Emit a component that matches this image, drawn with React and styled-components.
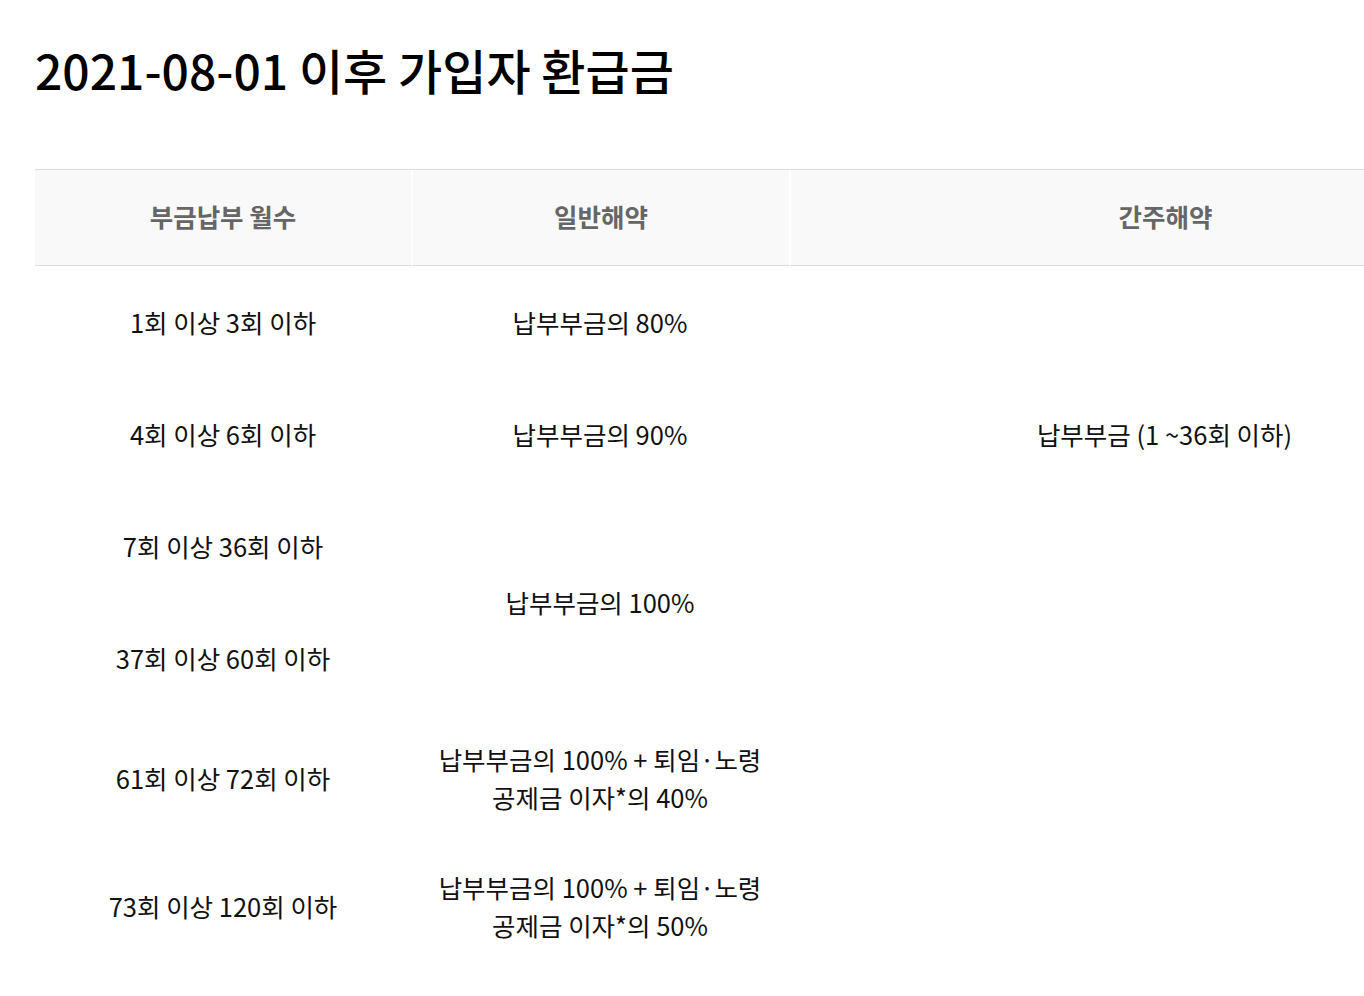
import React from 'react';
import styled, { createGlobalStyle } from 'styled-components';

const GlobalStyle = createGlobalStyle`
  html, body {
    margin: 0;
    padding: 0;
    background: #fff;
    overflow-x: hidden;
  }
  body {
    font-family: "Noto Sans CJK KR", "Noto Sans", sans-serif;
    color: #111;
  }
`;

const Page = styled.div`
  padding: 34px 0 40px 35px;
`;

const Title = styled.h2`
  margin: 0 0 65px;
  font-size: 48px;
  font-weight: 500;
  line-height: 70px;
  color: #000;
`;

const Table = styled.table`
  width: 1505px;
  table-layout: fixed;
  border-collapse: separate;
  border-spacing: 0;
  border-top: 1px solid #dddddd;
`;

const Th = styled.th`
  box-sizing: border-box;
  height: 96px;
  padding: 0 0 4px;
  background: #f9f9f9;
  border-bottom: 1px solid #dddddd;
  border-left: ${p => (p.first ? '0' : '2px solid #fff')};
  font-size: 25.5px;
  font-weight: 700;
  color: #666;
  text-align: center;
  vertical-align: middle;
`;

const Td = styled.td`
  height: 112px;
  padding: 26px 10px;
  box-sizing: border-box;
  font-size: 25.5px;
  font-weight: 400;
  line-height: 38px;
  color: #111;
  text-align: center;
  vertical-align: middle;
`;

const rows = [
  { months: '1회 이상 3회 이하', normal: '납부부금의 80%' },
  { months: '4회 이상 6회 이하', normal: '납부부금의 90%' },
  { months: '7회 이상 36회 이하', normal: '납부부금의 100%', normalSpan: 2 },
  { months: '37회 이상 60회 이하', skipNormal: true },
  { months: '61회 이상 72회 이하', normal: ['납부부금의 100% + 퇴임·노령', '공제금 이자*의 40%'] },
  { months: '73회 이상 120회 이하', normal: ['납부부금의 100% + 퇴임·노령', '공제금 이자*의 50%'] },
];

const renderLines = value =>
  Array.isArray(value)
    ? value.map((line, i) => (
        <React.Fragment key={i}>
          {i > 0 && <br />}
          {line}
        </React.Fragment>
      ))
    : value;

export default function App() {
  return (
    <>
      <GlobalStyle />
      <Page>
        <Title>2021-08-01 이후 가입자 환급금</Title>
        <Table>
          <colgroup>
            <col style={{ width: 376 }} />
            <col style={{ width: 378 }} />
            <col />
          </colgroup>
          <thead>
            <tr>
              <Th first>부금납부 월수</Th>
              <Th>일반해약</Th>
              <Th>간주해약</Th>
            </tr>
          </thead>
          <tbody>
            {rows.map((row, i) => (
              <tr key={i}>
                <Td>{row.months}</Td>
                {!row.skipNormal && (
                  <Td rowSpan={row.normalSpan || 1}>{renderLines(row.normal)}</Td>
                )}
                {i === 0 && <Td rowSpan={3}>납부부금 (1 ~36회 이하)</Td>}
                {i === 3 && <Td rowSpan={3} />}
              </tr>
            ))}
          </tbody>
        </Table>
      </Page>
    </>
  );
}
